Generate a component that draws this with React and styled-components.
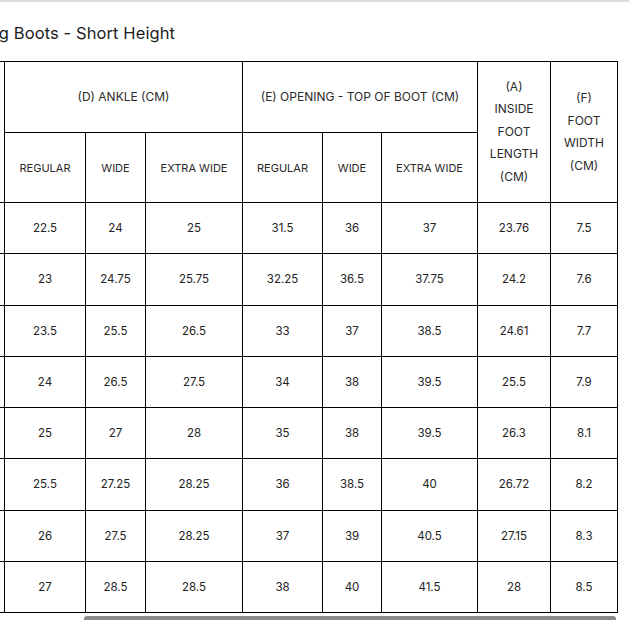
import React, { useLayoutEffect, useRef, useState } from "react";
import styled, { createGlobalStyle } from "styled-components";

const GlobalStyle = createGlobalStyle`
  html, body {
    margin: 0;
    padding: 0;
    background: #fff;
  }
  body {
    font-family: Inter, "Noto Sans", "Liberation Sans", sans-serif;
    color: #222;
  }
`;

const Page = styled.div`
  width: 629px;
  height: 620px;
  display: flex;
  flex-direction: column;
  border-top: 2px solid #dedfdc;
  box-sizing: border-box;
  overflow: hidden;
`;

const Scroller = styled.div`
  flex: 1;
  overflow: hidden;
`;

const Content = styled.div`
  width: max-content;
  padding: 0 11px 0 20px;
`;

const Title = styled.h2`
  margin: 0 0 0 8px;
  padding: 21px 0 0 0;
  height: 59px;
  box-sizing: border-box;
  font-size: 16.5px;
  font-weight: 400;
  color: #1d1d1d;
  letter-spacing: 0.1px;
`;

const Table = styled.table`
  border-collapse: collapse;
  table-layout: fixed;
  text-align: center;
`;

const HeadCell = styled.th`
  border: 1px solid #000;
  font-weight: 400;
  font-size: ${({ big }) => (big ? "12px" : "11px")};
  line-height: ${({ tall }) => (tall ? "22.5px" : "16px")};
  color: #2a2a2a;
  padding: 0 4px;
  height: ${({ high }) => high}px;
  box-sizing: border-box;
`;

const Cell = styled.td`
  border: 1px solid #000;
  font-size: 11.5px;
  color: #222;
  height: 51.25px;
  padding: 0;
  box-sizing: border-box;
`;

const Track = styled.div`
  height: 6px;
  padding-top: 2px;
  margin-right: 13px;
  box-sizing: border-box;
`;

const Thumb = styled.div`
  height: 100%;
  background: #8a8a8a;
  border-radius: 3px 3px 0 0;
`;

const widths = [84, 81, 60, 97, 80, 59, 96, 73, 67];

const rows = [
  ["5", "22.5", "24", "25", "31.5", "36", "37", "23.76", "7.5"],
  ["5.5", "23", "24.75", "25.75", "32.25", "36.5", "37.75", "24.2", "7.6"],
  ["6", "23.5", "25.5", "26.5", "33", "37", "38.5", "24.61", "7.7"],
  ["6.5", "24", "26.5", "27.5", "34", "38", "39.5", "25.5", "7.9"],
  ["7", "25", "27", "28", "35", "38", "39.5", "26.3", "8.1"],
  ["7.5", "25.5", "27.25", "28.25", "36", "38.5", "40", "26.72", "8.2"],
  ["8", "26", "27.5", "28.25", "37", "39", "40.5", "27.15", "8.3"],
  ["8.5", "27", "28.5", "28.5", "38", "40", "41.5", "28", "8.5"],
];

export default function App() {
  const scrollRef = useRef(null);
  const [thumb, setThumb] = useState({ left: 0, width: 0 });

  useLayoutEffect(() => {
    const el = scrollRef.current;
    el.scrollLeft = el.scrollWidth;
    const track = el.clientWidth - 13;
    const ratio = el.clientWidth / el.scrollWidth;
    setThumb({
      left: (el.scrollLeft / el.scrollWidth) * track,
      width: ratio * track,
    });
  }, []);

  return (
    <>
      <GlobalStyle />
      <Page>
        <Scroller ref={scrollRef}>
          <Content>
            <Title>Tall Riding Boots - Short Height</Title>
            <Table>
              <colgroup>
                {widths.map((w, i) => (
                  <col key={i} style={{ width: w }} />
                ))}
              </colgroup>
              <thead>
                <tr>
                  <HeadCell rowSpan={2} big>SIZE (US)</HeadCell>
                  <HeadCell colSpan={3} big high={71}>(D) ANKLE (CM)</HeadCell>
                  <HeadCell colSpan={3} big high={71}>(E) OPENING - TOP OF BOOT (CM)</HeadCell>
                  <HeadCell rowSpan={2} tall big>
                    (A)<br />INSIDE<br />FOOT<br />LENGTH<br />(CM)
                  </HeadCell>
                  <HeadCell rowSpan={2} tall big>
                    (F)<br />FOOT<br />WIDTH<br />(CM)
                  </HeadCell>
                </tr>
                <tr>
                  <HeadCell high={70}>REGULAR</HeadCell>
                  <HeadCell high={70}>WIDE</HeadCell>
                  <HeadCell high={70}>EXTRA WIDE</HeadCell>
                  <HeadCell high={70}>REGULAR</HeadCell>
                  <HeadCell high={70}>WIDE</HeadCell>
                  <HeadCell high={70}>EXTRA WIDE</HeadCell>
                </tr>
              </thead>
              <tbody>
                {rows.map((r, i) => (
                  <tr key={i}>
                    {r.map((v, j) => (
                      <Cell key={j}>{v}</Cell>
                    ))}
                  </tr>
                ))}
              </tbody>
            </Table>
          </Content>
        </Scroller>
        <Track>
          <Thumb style={{ marginLeft: thumb.left, width: thumb.width }} />
        </Track>
      </Page>
    </>
  );
}
